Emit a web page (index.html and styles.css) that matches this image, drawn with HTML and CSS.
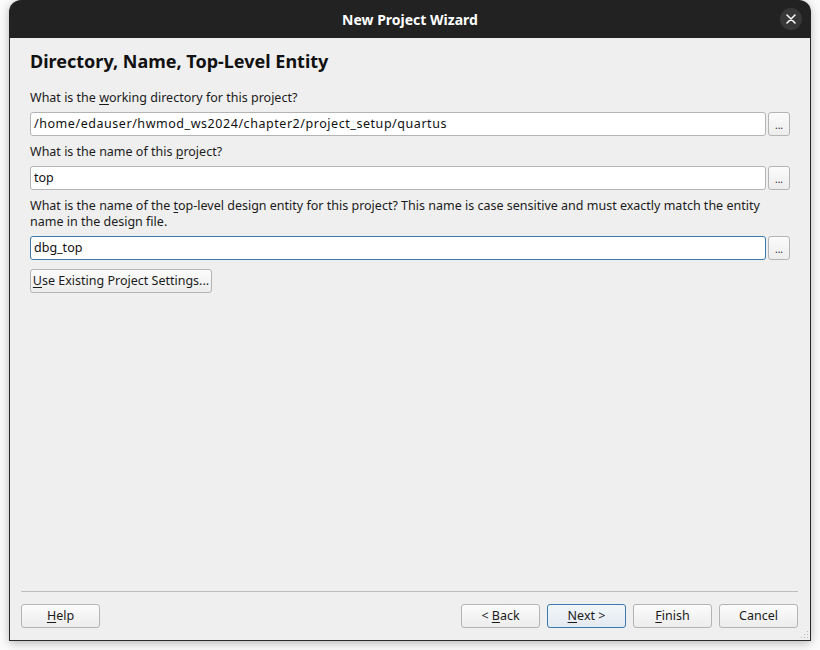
FILE: index.html
```html
<!DOCTYPE html>
<html>
<head>
<meta charset="utf-8">
<link rel="stylesheet" href="styles.css">
</head>
<body>
<div class="window">
  <div class="titlebar">
    <span class="title">New Project Wizard</span>
    <span class="close"><svg width="10" height="10" viewBox="0 0 10 10"><path d="M1 1L9 9M9 1L1 9" stroke="#fff" stroke-width="1.5" stroke-linecap="round"/></svg></span>
  </div>
  <div class="body">
    <div class="content">
      <h1 class="heading">Directory, Name, Top-Level Entity</h1>
      <div class="label">What is the <u>w</u>orking directory for this project?</div>
      <div class="field">
        <div class="input path">/home/edauser/hwmod_ws2024/chapter2/project_setup/quartus</div>
        <div class="dots">...</div>
      </div>
      <div class="label">What is the name of this <u>p</u>roject?</div>
      <div class="field">
        <div class="input">top</div>
        <div class="dots">...</div>
      </div>
      <div class="label">What is the name of the <u>t</u>op-level design entity for this project? This name is case sensitive and must exactly match the entity name in the design file.</div>
      <div class="field">
        <div class="input focus">dbg_top</div>
        <div class="dots">...</div>
      </div>
      <div class="btn existing"><u>U</u>se Existing Project Settings...</div>
    </div>
    <div class="footer">
      <div class="sep"></div>
      <div class="buttons">
        <div class="btn push"><u>H</u>elp</div>
        <div class="spacer"></div>
        <div class="btn push">&lt; <u>B</u>ack</div>
        <div class="btn push default"><u>N</u>ext &gt;</div>
        <div class="btn push"><u>F</u>inish</div>
        <div class="btn push">Cancel</div>
      </div>
      <svg class="grip" width="9" height="9" viewBox="0 0 9 9"><g fill="#b8b8b8"><rect x="7" y="1" width="1" height="1"/><rect x="4" y="4" width="1" height="1"/><rect x="7" y="4" width="1" height="1"/><rect x="1" y="7" width="1" height="1"/><rect x="4" y="7" width="1" height="1"/><rect x="7" y="7" width="1" height="1"/></g></svg>
    </div>
  </div>
</div>
</body>
</html>
```
FILE: styles.css
```css
html, body {
  margin: 0;
  padding: 0;
}
body {
  background: #fbfbfb;
  width: 820px;
  height: 650px;
  overflow: hidden;
  font-family: "Noto Sans", "Open Sans", sans-serif;
  color: #1b1b1b;
}
.window {
  margin-left: 9px;
  width: 802px;
  height: 641px;
  display: flex;
  flex-direction: column;
  border-radius: 12px 12px 0 0;
  box-shadow: 0 2px 10px rgba(0,0,0,0.28);
}
.titlebar {
  height: 38px;
  background: #222222;
  border-radius: 12px 12px 0 0;
  display: flex;
  align-items: center;
  justify-content: center;
  position: relative;
  flex: none;
}
.title {
  color: #ffffff;
  font-weight: bold;
  font-size: 14px;
}
.close {
  position: absolute;
  right: 9px;
  top: 8px;
  width: 22px;
  height: 22px;
  border-radius: 50%;
  background: #383838;
  display: flex;
  align-items: center;
  justify-content: center;
}
.body {
  flex: 1;
  background: #efefef;
  border: 1px solid #2c2c2c;
  border-top: none;
  display: flex;
  flex-direction: column;
}
.content {
  flex: 1;
  padding: 11px 20px 0 20px;
}
.heading {
  margin: 0 0 17px 0;
  font-size: 18px;
  font-weight: bold;
  line-height: 24px;
  color: #111;
}
.label {
  font-size: 12.5px;
  line-height: 16px;
  margin-bottom: 6px;
}
.field {
  display: flex;
  gap: 2px;
  margin-bottom: 8px;
}
.input {
  flex: 1;
  height: 24px;
  box-sizing: border-box;
  background: #fff;
  border: 1px solid #b4b4b4;
  border-radius: 3px;
  font-size: 12.5px;
  line-height: 22px;
  padding-left: 3px;
  color: #111;
}
.input.path {
  letter-spacing: 0.55px;
}
.input.focus {
  border-color: #3a7ab0;
}
.dots {
  width: 22px;
  height: 24px;
  box-sizing: border-box;
  border: 1px solid #b4b4b4;
  border-radius: 3px;
  background: linear-gradient(#fbfbfb, #ededed);
  font-size: 10px;
  line-height: 24px;
  text-align: center;
}
.btn {
  box-sizing: border-box;
  height: 24px;
  border: 1px solid #b4b4b4;
  border-radius: 3px;
  background: linear-gradient(#fcfcfc, #ececec);
  font-size: 12.5px;
  line-height: 22px;
  text-align: center;
  white-space: nowrap;
}
.existing {
  display: inline-block;
  width: 182px;
  margin-top: -1px;
}
.footer {
  position: relative;
  padding: 0 12px 12px 11px;
}
.sep {
  height: 1px;
  background: #bdbdbd;
  margin-bottom: 12px;
}
.buttons {
  display: flex;
  gap: 7px;
}
.push {
  width: 79px;
}
.spacer {
  flex: 1;
}
.default {
  border-color: #3a7ab0;
  background: linear-gradient(#f2f6f9, #e3eaf0);
}
.grip {
  position: absolute;
  right: 1px;
  bottom: 1px;
}
u {
  text-decoration-thickness: 1px;
  text-underline-offset: 2px;
}
```
